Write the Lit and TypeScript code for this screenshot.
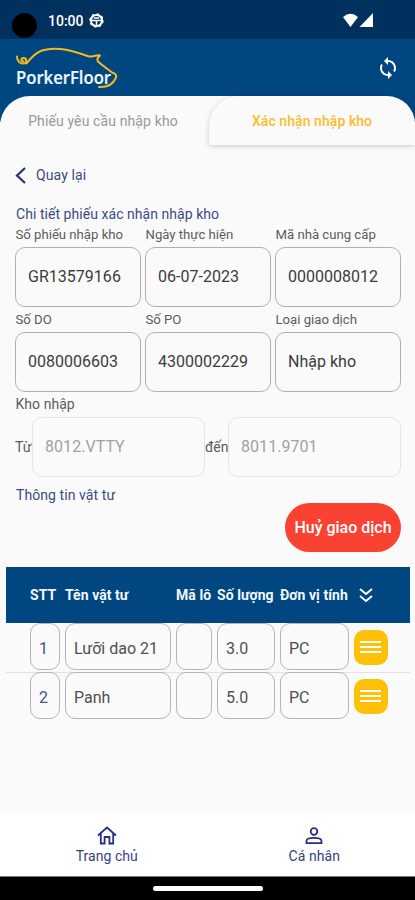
import { LitElement, html, css, svg } from "lit";
import { customElement, property } from "lit/decorators.js";

@customElement("field-box")
class FieldBox extends LitElement {
  @property() label = "";
  @property() value = "";
  static styles = css`
    :host { display: block; }
    .label { height: 24px; line-height: 23px; padding-left: 0.5px; font-size: 13.200px; letter-spacing: -0.02px; color: #5c5c5c; white-space: nowrap; }
    .box { box-sizing: border-box; height: 60px; border: 1px solid #b0b0b0; border-radius: 10px; padding: 0 12px; line-height: 57px; font-size: 16px; letter-spacing: 0.02px; color: #3c3c3c; white-space: nowrap; }
  `;
  render() {
    return html`<div class="label">${this.label}</div><div class="box">${this.value}</div>`;
  }
}

@customElement("porker-logo")
class PorkerLogo extends LitElement {
  static styles = css`
    :host { display: block; width: 106px; height: 46px; }
    svg { display: block; }
    .name { font: 600 18px "Open Sans", "Noto Sans", sans-serif; fill: #eef6ff; stroke: #eef6ff; stroke-width: 0.2px; }
  `;
  render() {
    return html`<svg width="106" height="46" viewBox="14 44 106 46">
      ${svg`<g fill="none" stroke="#f4b920" stroke-width="2" stroke-linecap="round" stroke-linejoin="round">
        <path d="M17 56.500C17 61 20 64 24 63.500C27.500 63 27 58 23.500 58C20.500 58 20.500 62 23.500 61.200"/>
        <path d="M26.500 63.500C30 59 34 53.500 42 50.500C57 46 72 50.500 89 56.500C93 57 96 54.500 100 55.500C98 57.500 96 59 98 61.500C104 67 108 69 112 72.500C115 73.500 117.500 75 115.500 78.500C113.500 83 109 87.500 99 87"/>
      </g>`}
      <text class="name" x="16" y="84" textLength="95" lengthAdjust="spacingAndGlyphs">PorkerFloor</text>
    </svg>`;
  }
}

const materials = [
  { no: "1", name: "Lưỡi dao 21", lot: "", qty: "3.0", unit: "PC" },
  { no: "2", name: "Panh", lot: "", qty: "5.0", unit: "PC" },
];

@customElement("app-root")
class AppRoot extends LitElement {
  static styles = css`
    :host { display: flex; flex-direction: column; width: 415px; height: 900px; overflow: hidden; background: #fafafa; font-family: Roboto, "Liberation Sans", sans-serif; white-space: nowrap; }
    svg { display: block; flex: none; }
    .status { height: 39px; flex: none; background: #00305e; display: flex; align-items: center; color: #fff; padding: 2px 42px 0 12px; box-sizing: border-box; }
    .camera { width: 25px; height: 25px; border-radius: 50%; background: #000; margin: 9px 11px 0 0; }
    .clock { font-size: 14px; font-weight: 500; letter-spacing: 0; width: 41px; }
    .signals { margin-left: auto; }
    .header { height: 57px; flex: none; background: #004680; display: flex; justify-content: space-between; padding: 5px 15px 0 14px; box-sizing: border-box; }
    .sync { margin-top: 12px; }
    .tabs-bg { background: #004680; height: 26px; flex: none; margin-bottom: -26px; }
    .tabs { display: flex; height: 51px; flex: none; position: relative; }
    .tab { box-sizing: border-box; text-align: center; font-size: 14px; line-height: 50px; }
    .tab.idle { width: 250px; margin-right: -41px; padding-right: 44px; color: #999; letter-spacing: 0.12px; background: #fafafa; border-radius: 30px 0 0 0; }
    .tab.active { width: 206px; height: 49px; color: #fdbb2c; font-weight: 500; letter-spacing: 0.07px; background: #fafafa; border-radius: 30px 28px 0 0; box-shadow: 0 1px 5px rgba(0,0,0,.2); }
    .content { flex: 1; min-height: 0; padding: 0 14px 0 15px; color: #3b4a84; }
    .back { display: flex; align-items: center; gap: 9px; height: 24px; margin-top: 16px; font-size: 14px; letter-spacing: 0.1px; }
    .section { font-size: 14px; line-height: 20px; letter-spacing: 0.05px; padding-left: 1px; }
    .details { margin-top: 17px; }
    .grid { display: grid; grid-template-columns: repeat(3, 126px); column-gap: 4px; row-gap: 1px; margin-top: -1px; }
    .kho { font-size: 14px; letter-spacing: 0.05px; line-height: 25px; color: #5c5c5c; padding-left: 0.5px; }
    .route { display: flex; align-items: center; height: 60px; color: #5c5c5c; font-size: 14px; }
    .from { width: 17px; }
    .to { width: 23px; }
    .plain { flex: 1; box-sizing: border-box; height: 60px; line-height: 57px; border: 1px solid #e5e5e5; border-radius: 10px; padding-left: 12px; font-size: 16px; letter-spacing: 0.05px; color: #a2a2a2; }
    .material { margin-top: 8px; margin-bottom: 1px; letter-spacing: 0.08px; }
    .cancel { display: block; margin: -3px 0 0 auto; width: 116px; height: 49px; border: 0; padding: 0; border-radius: 25px; background: #fa4233; color: #fff; font: 500 16px Roboto, sans-serif; }
    .table { margin: 15px -9px 0; }
    .row { display: grid; grid-template-columns: 30px 106px 36px 58px 69px 35px; column-gap: 5px; padding-left: 24px; }
    .row.head { height: 56px; align-items: center; background: #004680; color: #f2f7ff; font-size: 14px; letter-spacing: 0.05px; font-weight: 700; }
    .row.item { height: 49px; box-sizing: border-box; }
    .row.item + .item { border-top: 1px solid #e2e2e2; }
    .row.item + .item > * { transform: translateY(-1px); }
    .cell { box-sizing: border-box; height: 47px; border: 1px solid #b5b5b5; border-radius: 10px; font-size: 16px; letter-spacing: 0; line-height: 49px; padding-left: 8px; color: #505050; }
    .cell.no { color: #45508c; }
    .more { display: flex; align-items: center; justify-content: center; width: 34px; height: 35px; margin-top: 7px; border: 0; padding: 0 1px 2px 0; box-sizing: border-box; border-radius: 10px; background: #ffc107; }
    .chev { margin-left: 5px; }
    .nav { display: flex; height: 61px; flex: none; background: #fff; color: #35437f; }
    .nav-item { width: 50%; display: flex; flex-direction: column; align-items: center; padding: 10px 0 0 6px; box-sizing: border-box; font-size: 14px; line-height: 19px; letter-spacing: 0.05px; }
    .nav-item svg { margin-bottom: 1px; }
    .gesture { height: 24px; flex: none; box-sizing: border-box; background: #000; border-top: 1px solid #777; display: flex; justify-content: center; padding-top: 9px; }
    .pill { width: 110px; height: 5px; border-radius: 3px; background: #fff; }
  `;
  render() {
    return html`
      <div class="status">
        <span class="camera"></span><span class="clock">10:00</span>
        <svg width="15" height="15" viewBox="0 0 15 15" fill="none" stroke="#fff">
          <circle cx="7.500" cy="7.500" r="5.600" stroke-width="2" />
          <circle cx="7.500" cy="7.500" r="6.600" stroke-width="1.200" stroke-dasharray="2.600 2.580" />
          <path d="M3 7.500h9M7.500 7.500v5M4.800 5h5.400" stroke-width="1.500" />
        </svg>
        <svg class="signals" width="31" height="15" viewBox="-1 0 31 15" fill="#fff">
          <path d="M0 4Q7.500-2.500 15 4L7.500 14ZM30 0v14H16.500Z" />
        </svg>
      </div>
      <div class="header">
        <porker-logo></porker-logo>
        <svg class="sync" width="24" height="24" viewBox="0 0 24 24" fill="#fff">
          <path d="M12 4V1L8 5l4 4V6c3.310 0 6 2.690 6 6 0 1.010-.25 1.970-.7 2.800l1.460 1.460C19.540 15.030 20 13.570 20 12c0-4.420-3.580-8-8-8zm0 14c-3.310 0-6-2.690-6-6 0-1.010.25-1.970.7-2.800L5.240 7.740C4.460 8.970 4 10.430 4 12c0 4.420 3.580 8 8 8v3l4-4-4-4v3z" />
        </svg>
      </div>
      <div class="tabs-bg"></div>
      <div class="tabs"><div class="tab idle">Phiếu yêu cầu nhập kho</div><div class="tab active">Xác nhận nhập kho</div></div>
      <div class="content">
        <div class="back">
          <svg width="12" height="17" viewBox="0 0 12 17" fill="none" stroke="#25317d" stroke-width="2.2"><path d="M10 1L2 8.500L10 16" /></svg>
          <span>Quay lại</span>
        </div>
        <div class="section details">Chi tiết phiếu xác nhận nhập kho</div>
        <div class="grid">
          <field-box label="Số phiếu nhập kho" value="GR13579166"></field-box>
          <field-box label="Ngày thực hiện" value="06-07-2023"></field-box>
          <field-box label="Mã nhà cung cấp" value="0000008012"></field-box>
          <field-box label="Số DO" value="0080006603"></field-box>
          <field-box label="Số PO" value="4300002229"></field-box>
          <field-box label="Loại giao dịch" value="Nhập kho"></field-box>
        </div>
        <div class="kho">Kho nhập</div>
        <div class="route"><span class="from">Từ</span><div class="plain">8012.VTTY</div><span class="to">đến</span><div class="plain">8011.9701</div></div>
        <div class="section material">Thông tin vật tư</div>
        <button class="cancel">Huỷ giao dịch</button>
        <div class="table">
          <div class="row head">
            <span>STT</span><span>Tên vật tư</span><span>Mã lô</span><span>Số lượng</span><span>Đơn vị tính</span>
            <svg class="chev" width="14" height="15" viewBox="0 0 14 15" fill="none" stroke="#fff" stroke-width="2"><path d="M1 1l6 5 6-5M1 8l6 5 6-5" /></svg>
          </div>
          ${materials.map((m) => html`<div class="row item">
            <div class="cell no">${m.no}</div><div class="cell">${m.name}</div><div class="cell">${m.lot}</div><div class="cell">${m.qty}</div><div class="cell">${m.unit}</div>
            <button class="more"><svg width="21" height="14" viewBox="0 0 21 14" stroke="#fff" stroke-width="2"><path d="M0 2h21M0 7h21M0 12h21" /></svg></button>
          </div>`)}
        </div>
      </div>
      <div class="nav">
        <div class="nav-item">
          <svg width="20" height="21" viewBox="0 0 20 21" fill="none" stroke="#25317d" stroke-width="1.8"><path d="M1 10.500L10 2.500L19 10.500M3.800 8.500V18.500H7.600V12H12.400V18.500H16.200V8.500" /></svg>
          <span>Trang chủ</span>
        </div>
        <div class="nav-item">
          <svg width="20" height="21" viewBox="0 0 20 21" fill="none" stroke="#25317d" stroke-width="1.8"><circle cx="10" cy="6.500" r="3.300" /><path d="M2.500 18.200V16C2.500 11.800 17.500 11.800 17.500 16V18.200Z" /></svg>
          <span>Cá nhân</span>
        </div>
      </div>
      <div class="gesture"><div class="pill"></div></div>
    `;
  }
}
